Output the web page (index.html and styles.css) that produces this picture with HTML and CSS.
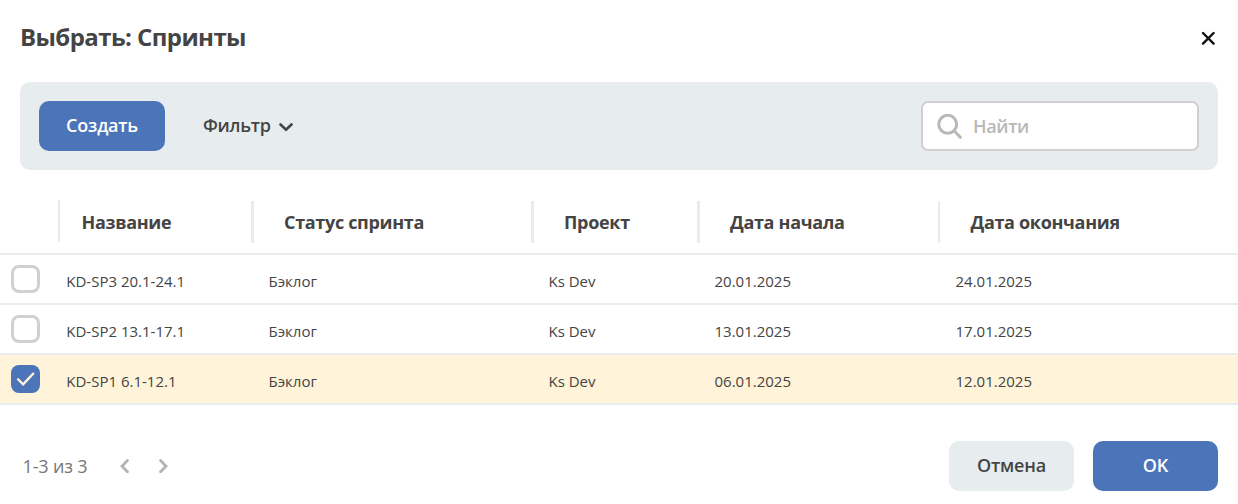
FILE: index.html
```html
<!DOCTYPE html>
<html lang="ru">
<head>
<meta charset="utf-8">
<title>Выбрать: Спринты</title>
<link rel="stylesheet" href="styles.css">
</head>
<body>
<main class="dialog">
  <header class="header">
    <h1 class="title">Выбрать: Спринты</h1>
    <button class="close" aria-label="Закрыть"><svg width="14" height="14" viewBox="0 0 14 14"><path d="M2 2l10.6 10.6M12.6 2l-10.6 10.6"/></svg></button>
  </header>
  <section class="toolbar">
    <button class="btn primary create">Создать</button>
    <button class="filter"><span>Фильтр</span><svg width="14" height="9" viewBox="0 0 14 9"><path d="M1.5 1.5l5.5 5.3 5.5-5.3"/></svg></button>
    <label class="search"><svg width="26" height="26" viewBox="0 0 26 26"><circle cx="10.7" cy="10.3" r="9"/><path d="M17.3 17l6 6.3"/></svg><span>Найти</span></label>
  </section>
  <section class="table">
    <div class="row head"><span></span><span>Название</span><span>Статус спринта</span><span>Проект</span><span>Дата начала</span><span>Дата окончания</span></div>
    <div class="row"><i class="check"></i><span>KD-SP3 20.1-24.1</span><span>Бэклог</span><span>Ks Dev</span><span>20.01.2025</span><span>24.01.2025</span></div>
    <div class="row"><i class="check"></i><span>KD-SP2 13.1-17.1</span><span>Бэклог</span><span>Ks Dev</span><span>13.01.2025</span><span>17.01.2025</span></div>
    <div class="row selected"><i class="check"><svg width="18" height="14" viewBox="0 0 18 14"><path d="M1 7.2l5.1 5.2L16.2 1.6"/></svg></i><span>KD-SP1 6.1-12.1</span><span>Бэклог</span><span>Ks Dev</span><span>06.01.2025</span><span>12.01.2025</span></div>
  </section>
  <footer class="footer">
    <span class="count">1-3 из 3</span>
    <svg class="prev" width="9" height="14" viewBox="0 0 9 14"><path d="M7.4 1.5L2 7.2l5.4 5.5"/></svg>
    <svg class="next" width="9" height="14" viewBox="0 0 9 14"><path d="M1.6 1.5L7 7.2l-5.4 5.5"/></svg>
    <button class="btn cancel">Отмена</button>
    <button class="btn primary">OK</button>
  </footer>
</main>
</body>
</html>
```
FILE: styles.css
```css
* { box-sizing: border-box; }
body { margin: 0; background: #fff; color: #444; font-family: "Open Sans", sans-serif; }
button { border: 0; padding: 0; background: none; font: inherit; color: inherit; }
svg { display: block; fill: none; stroke: currentColor; stroke-linecap: round; }
.dialog { width: 1238px; height: 504px; overflow: hidden; }
.header { height: 82px; padding: 19px 23px 0 20px; display: flex; justify-content: space-between; align-items: flex-start; }
.title { margin: 0; font-size: 24px; line-height: 36px; font-weight: 700; letter-spacing: -0.58px; }
.close { margin-top: 12px; color: #111; stroke-width: 2.4; }
.toolbar { height: 88px; margin: 0 20px; padding: 0 19px; display: flex; align-items: center; background: #e7edef; border-radius: 10px; }
.btn { width: 125px; height: 50px; padding-bottom: 2px; border-radius: 10px; font-size: 18px; font-weight: 600; letter-spacing: -0.2px; background: #e7edef; }
.primary { background: #4b74b9; color: #fff; }
.create { width: 126px; }
.filter { margin-left: 38px; padding-bottom: 2px; display: flex; align-items: center; gap: 8px; font-size: 18px; font-weight: 600; letter-spacing: -0.3px; }
.filter svg { stroke-width: 2.6; margin-top: 4px; }
.search { margin-left: auto; width: 278px; height: 50px; padding-left: 14px; display: flex; align-items: center; gap: 10px; background: #fff; border: 2px solid #d0d0d0; border-radius: 7px; color: #b8b8b8; font-size: 18px; font-weight: 600; letter-spacing: -0.35px; }
.search svg { stroke-width: 3; margin-top: 2px; color: #b8b8b8; }
.table { margin-top: 30px; }
.row { display: grid; grid-template-columns: 58px 193px 280px 166px 241px 1fr; height: 50px; border-bottom: 2px solid #e7edef; font-size: 15px; line-height: 53px; }
.row span { padding-left: 17.5px; white-space: nowrap; }
.row span:nth-child(2) { padding-left: 8.3px; }
.head { height: 55px; font-size: 18px; line-height: 43px; font-weight: 700; letter-spacing: -0.32px; }
.head span + span { height: 42px; margin-top: 1px; border-left: 3px solid #e7edef; padding-left: 30px; }
.head span:nth-child(2) { margin-top: 0; border-left-width: 2px; padding-left: 21.5px; line-height: 45px; }
.head span:last-child { border-left-width: 2px; padding-left: 30.5px; }
.check { width: 29px; height: 28px; margin: 10px 0 0 11px; border: 3px solid #d0d0d0; border-radius: 8px; background: #fff; }
.selected { background: #fff4d9; }
.selected .check { display: grid; place-items: center; border: 0; background: #4b74b9; color: #fff4d9; stroke-width: 2.3; }
.footer { display: flex; align-items: center; height: 50px; margin: 36px 20px 0 22.5px; }
.count { width: 66px; color: #777; font-size: 18px; font-weight: 500; letter-spacing: -0.15px; white-space: nowrap; }
.footer svg { color: #b3b3b3; stroke-width: 2.8; }
.prev { margin-left: 31px; }
.next { margin-left: 30px; }
.cancel { margin-left: auto; margin-right: 19px; }
```
